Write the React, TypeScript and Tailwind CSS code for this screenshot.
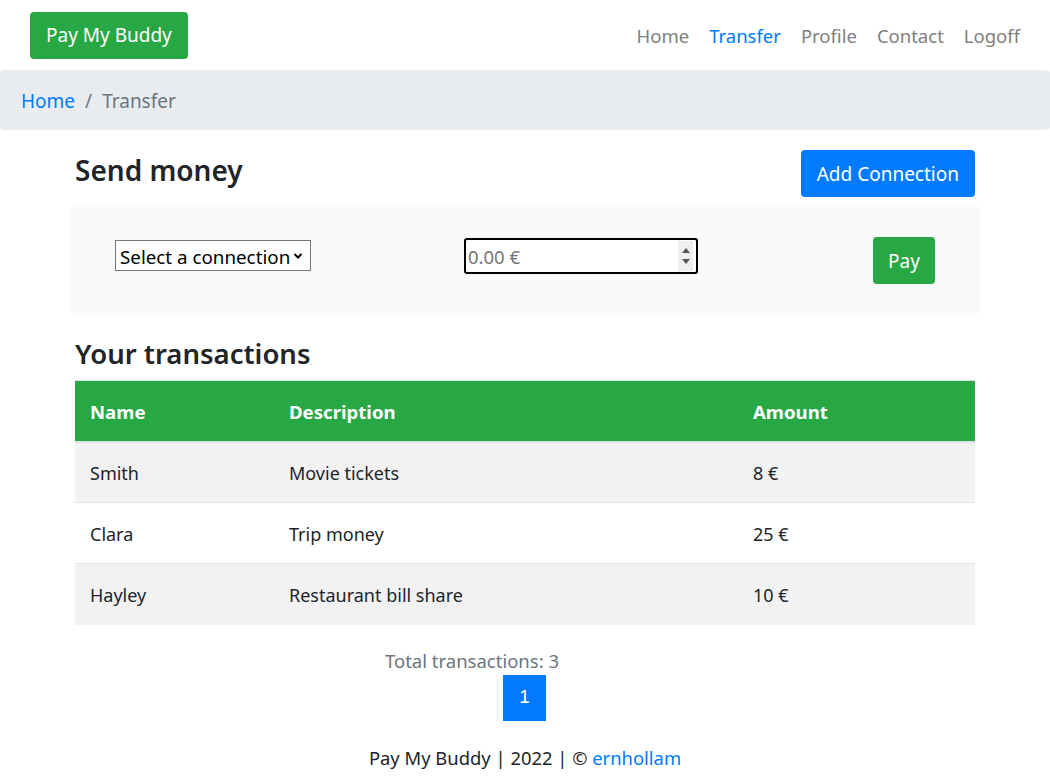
import React from "react";

const rows = [
  { name: "Smith", desc: "Movie tickets", amount: "8 €" },
  { name: "Clara", desc: "Trip money", amount: "25 €" },
  { name: "Hayley", desc: "Restaurant bill share", amount: "10 €" },
];

export default function App() {
  return (
    <div className="min-h-[782px] bg-white text-[#212529]" style={{ fontFamily: "'Noto Sans', sans-serif" }}>
      {/* Navbar */}
      <nav className="flex h-[70px] items-center justify-between px-[30px]">
        <div className="flex h-[47px] items-center rounded-[4px] bg-[#28a745] px-[16px] text-[19px] text-white">Pay My Buddy</div>
        <div className="flex items-center gap-[20px] pt-[2px] text-[18.5px] text-[#808080]">
          <span>Home</span>
          <span className="text-[#007bff]">Transfer</span>
          <span>Profile</span>
          <span>Contact</span>
          <span>Logoff</span>
        </div>
      </nav>

      {/* Breadcrumb */}
      <div className="flex h-[60px] items-center rounded-[4px] bg-[#e9ecef] px-[21px] pt-[2px] text-[19px]">
        <span className="text-[#007bff]">Home</span>
        <span className="px-[10px] text-[#6c757d]">/</span>
        <span className="text-[#6c757d]">Transfer</span>
      </div>

      <div className="mx-auto w-[900px]">
        {/* Send money header */}
        <div className="mt-[20px] flex items-start justify-between">
          <h3 className="text-[28px] font-semibold leading-[40px]">Send money</h3>
          <div className="flex h-[47px] items-center rounded-[4px] bg-[#007bff] px-[16px] pt-[1px] text-[19px] text-white">Add Connection</div>
        </div>

        {/* Form panel */}
        <div className="-mx-[5px] mt-[10px] flex h-[106px] items-start bg-[#f8f9fa]">
          <div className="ml-[45px] mt-[33px] flex h-[31px] w-[196px] items-center justify-between border border-[#767676] bg-white pl-[4px] pr-[7px] pt-[3px] text-[18.8px] text-black">
            <span>Select a connection</span>
            <svg width="10" height="8" viewBox="0 0 10 8" className="-mt-[3px]">
              <path d="M1.5 2 L5 5.5 L8.5 2" stroke="#000" strokeWidth="2" fill="none" />
            </svg>
          </div>
          <div className="ml-[153px] mt-[31px] flex h-[36px] w-[234px] items-center justify-between rounded-[3px] border-2 border-black bg-white pl-[2px] pr-[3px] text-[18.5px] text-[#757575]">
            <span className="pt-[2px]">0.00 €</span>
            <div className="flex h-[30px] w-[15px] flex-col items-center justify-center gap-[6px] bg-[#efefef]">
              <svg width="8" height="5" viewBox="0 0 8 5"><path d="M0 5 L4 0 L8 5 Z" fill="#555" /></svg>
              <svg width="8" height="5" viewBox="0 0 8 5"><path d="M0 0 L4 5 L8 0 Z" fill="#555" /></svg>
            </div>
          </div>
          <div className="ml-[175px] mt-[30px] flex h-[47px] w-[62px] items-center justify-center rounded-[4px] bg-[#28a745] pt-[1px] text-[19px] text-white">Pay</div>
        </div>

        {/* Transactions */}
        <h3 className="mt-[22px] text-[27.5px] font-semibold leading-[38px]">Your transactions</h3>
        <table className="mt-[7px] w-full border-collapse text-[18px]">
          <thead>
            <tr className="h-[61px] border-t border-[#dee2e6] bg-[#28a745] text-left text-white">
              <th className="w-[199px] border-b-2 border-[#dee2e6] pl-[15px] pt-[3px] text-[18.6px] font-bold">Name</th>
              <th className="w-[464px] border-b-2 border-[#dee2e6] pl-[15px] pt-[3px] text-[18.6px] font-bold">Description</th>
              <th className="border-b-2 border-[#dee2e6] pl-[15px] pt-[3px] text-[18.6px] font-bold">Amount</th>
            </tr>
          </thead>
          <tbody>
            {rows.map((r, i) => (
              <tr key={r.name} className={`h-[61px] ${i > 0 ? "border-t border-[#dee2e6]" : ""} ${i % 2 === 0 ? "bg-[#f2f2f2]" : "bg-white"}`}>
                <td className="pl-[15px] pt-[2px]">{r.name}</td>
                <td className="pl-[15px] pt-[2px]">{r.desc}</td>
                <td className="pl-[15px] pt-[2px]">{r.amount}</td>
              </tr>
            ))}
          </tbody>
        </table>

        {/* Pagination */}
        <div className="mt-[24px] pl-[310px] text-[18.5px] leading-[24px] text-[#6c757d]">Total transactions: 3</div>
        <div className="mt-[2px] flex justify-center">
          <div className="ml-[-1px] flex h-[46px] w-[43px] items-center justify-center bg-[#007bff] text-[19px] text-white" style={{ fontFamily: "'Liberation Sans', Arial, sans-serif" }}>1</div>
        </div>

        {/* Footer */}
        <div className="mt-[23px] text-center text-[18.4px] leading-[28px]">
          Pay My Buddy | 2022 | © <span className="text-[#007bff]">ernhollam</span>
        </div>
      </div>
    </div>
  );
}
